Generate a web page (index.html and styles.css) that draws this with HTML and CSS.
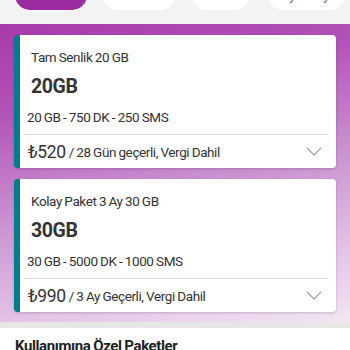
FILE: index.html
```html
<!DOCTYPE html>
<html lang="tr">
<head>
<meta charset="utf-8">
<link rel="stylesheet" href="styles.css">
</head>
<body>
<div class="tabs">
  <div class="tab tab-active w1">Sana Özel</div>
  <div class="tab w2">20 GB Üzeri</div>
  <div class="tab w3">Haftalık</div>
  <div class="tab w4">3 Ay ve Aylık</div>
</div>
<section class="promo">
  <article class="card">
    <div class="title">Tam Senlik 20 GB</div>
    <div class="big">20GB</div>
    <div class="specs">20 GB - 750 DK - 250 SMS</div>
    <div class="divider"></div>
    <div class="price-row">
      <span class="price">₺520</span><span class="period">/ 28 Gün geçerli, Vergi Dahil</span>
      <svg class="chev" width="16" height="9" viewBox="0 0 16 9"><path d="M1 1 L8 8 L15 1" fill="none" stroke="#9a9a9a" stroke-width="1.1"/></svg>
    </div>
  </article>
  <article class="card">
    <div class="title">Kolay Paket 3 Ay 30 GB</div>
    <div class="big">30GB</div>
    <div class="specs">30 GB - 5000 DK - 1000 SMS</div>
    <div class="divider"></div>
    <div class="price-row">
      <span class="price">₺990</span><span class="period">/ 3 Ay Geçerli, Vergi Dahil</span>
      <svg class="chev" width="16" height="9" viewBox="0 0 16 9"><path d="M1 1 L8 8 L15 1" fill="none" stroke="#9a9a9a" stroke-width="1.1"/></svg>
    </div>
  </article>
</section>
<div class="sep"></div>
<section class="special">
  <h2 class="heading">Kullanımına Özel Paketler</h2>
</section>
</body>
</html>
```

FILE: styles.css
```css
html, body {
  margin: 0;
  padding: 0;
  background: #ffffff;
  font-family: "Roboto", "Noto Sans", sans-serif;
  color: #333333;
  overflow: hidden;
}
.tabs {
  height: 24px;
  background: #f3f3f3;
  display: flex;
  padding-left: 15px;
  overflow: hidden;
}
.tab {
  flex: none;
  box-sizing: border-box;
  height: 30px;
  margin-top: -20px;
  margin-right: 16px;
  padding-top: 8px;
  border-radius: 15px;
  background: #ffffff;
  color: #666666;
  font-size: 13px;
  line-height: 16px;
  text-align: center;
  white-space: nowrap;
  overflow: hidden;
}
.tab-active {
  background: #9c2aa0;
  color: #ffffff;
}
.w1 { width: 72px; }
.w2 { width: 72px; margin-right: 17px; }
.w3 { width: 58px; margin-right: 18px; }
.w4 { width: 77px; }
.promo {
  background: linear-gradient(168deg, #a73aab 0%, #b354b8 25%, #c78ace 50%, #dcb4e0 72%, #f3e6f4 100%);
  padding: 11px 14px 10px 14px;
  display: flex;
  flex-direction: column;
  gap: 11px;
}
.card {
  background: #ffffff;
  border-radius: 4px;
  border-left: 6px solid #007e90;
  box-shadow: 0 1px 3px rgba(0,0,0,0.18);
  padding-top: 13px;
  letter-spacing: -0.4px;
  word-spacing: -0.5px;
}
.title {
  font-size: 13.5px;
  line-height: 18px;
  padding-left: 11px;
}
.big {
  font-size: 19.5px;
  font-weight: 700;
  line-height: 26px;
  margin-top: 8px;
  padding-left: 11px;
}
.specs {
  font-size: 13.5px;
  line-height: 18px;
  margin-top: 8px;
  padding-left: 7px;
}
.divider {
  height: 1px;
  background: #dddddd;
  margin: 8px 8px 0 5px;
}
.price-row {
  height: 33px;
  display: flex;
  align-items: center;
  padding-left: 8px;
  padding-right: 14px;
}
.price {
  font-size: 17.5px;
}
.period {
  font-size: 13.5px;
  margin-left: 3px;
  flex: 1;
}
.chev {
  flex: none;
}
.sep {
  height: 6px;
  background: #e6e6e6;
}
.special {
  padding: 9px 15px;
}
.heading {
  margin: 0;
  font-size: 15px;
  font-weight: 700;
  color: #222222;
  letter-spacing: -0.4px;
  word-spacing: -0.5px;
}
```
